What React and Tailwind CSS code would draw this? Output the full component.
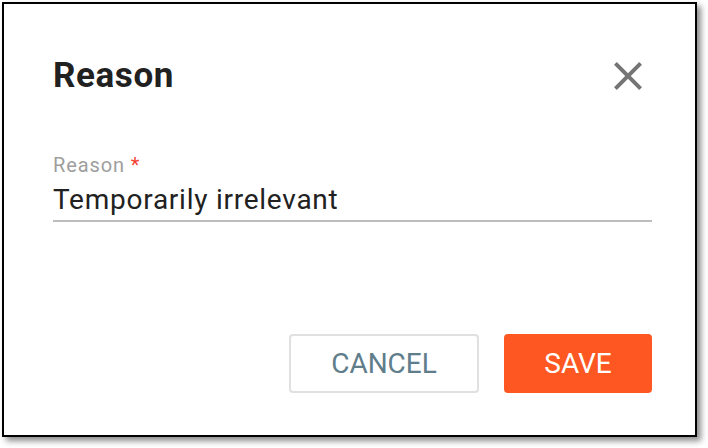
import React from "react";

const CloseIcon = () => (
  <svg width="48" height="48" viewBox="0 0 24 24" fill="#757575">
    <path d="M19 6.41L17.59 5 12 10.59 6.41 5 5 6.41 10.59 12 5 17.59 6.41 19 12 13.41 17.59 19 19 17.59 13.41 12z" />
  </svg>
);

export default function App() {
  return (
    <div className="w-[708px] h-[448px] bg-white p-[2px] font-['Roboto',sans-serif]">
      <div className="w-[695px] h-[435px] border-2 border-black bg-white shadow-[4px_4px_6px_rgba(0,0,0,0.45)] pt-[48px] pl-[49px] pr-[43px] flex flex-col">
        {/* header */}
        <div className="flex items-center justify-between h-[48px]">
          <h2 className="text-[35px] leading-[40px] font-bold text-[#212121] tracking-[0.6px]">Reason</h2>
          <button className="w-[48px] h-[48px] flex items-center justify-center">
            <CloseIcon />
          </button>
        </div>

        {/* field */}
        <div className="mt-[53px] border-b-2 border-[#bdbdbd] pb-[4px]">
          <label className="block text-[20px] leading-[24px] text-[#9e9e9e] tracking-[0.9px]">
            Reason <span className="text-[#f44336]">*</span>
          </label>
          <div className="mt-[7px] text-[28px] leading-[32px] text-[#212121] tracking-[0.75px]">
            Temporarily irrelevant
          </div>
        </div>

        {/* actions */}
        <div className="mt-[112px] flex justify-end gap-[25px]">
          <button className="w-[190px] h-[59px] rounded-[4px] border-2 border-[#e0e0e0] bg-white text-[28px] text-[#607d8b]">
            CANCEL
          </button>
          <button className="w-[148px] h-[59px] rounded-[4px] bg-[#ff5722] text-[28px] text-white">
            SAVE
          </button>
        </div>
      </div>
    </div>
  );
}
